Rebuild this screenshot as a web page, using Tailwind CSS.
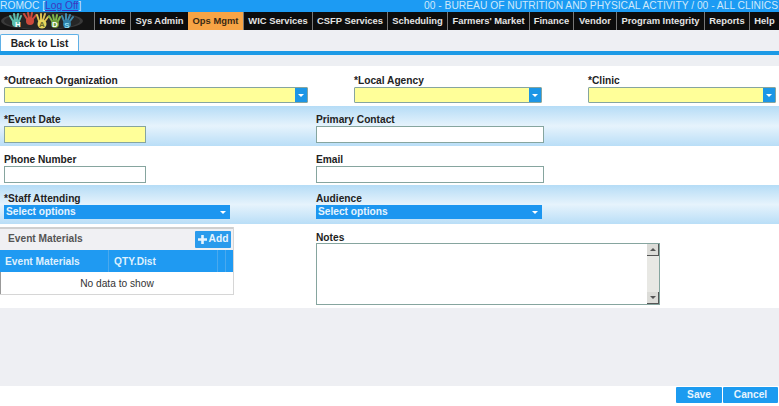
<!DOCTYPE html>
<html lang="en">
<head>
<meta charset="UTF-8">
<title>Outreach Event</title>
<script src="https://cdn.jsdelivr.net/npm/@tailwindcss/browser@4"></script>
</head>
<body class="bg-white font-['Liberation_Sans',Arial,sans-serif] text-[#222] overflow-hidden">
<div class="w-[779px] h-[406px] flex flex-col overflow-hidden">

  <!-- top bar -->
  <div class="h-[12px] bg-[#1c9bf3] flex justify-between items-center text-[10.25px] leading-[12px] text-[#cfe9fb]">
    <div class="whitespace-nowrap">ROMOC [<span class="text-[#3f37c0] underline">Log Off</span>]</div>
    <div class="whitespace-nowrap pr-[1px]">00 - BUREAU OF NUTRITION AND PHYSICAL ACTIVITY / 00 - ALL CLINICS</div>
  </div>

  <!-- nav -->
  <div class="h-[18px] bg-[#0c0c0c] flex text-[9.4px] font-bold text-[#e4e4e4] leading-[18px]">
    <div class="w-[94px] shrink-0 bg-[#141414] flex items-center">
      <svg width="84" height="18" viewBox="0 0 84 18" class="ml-[1px]">
        <ellipse cx="41" cy="9" rx="41" ry="9" fill="#3a3a3a"/>
        <ellipse cx="41" cy="9" rx="38" ry="8" fill="#262626"/>
        <g stroke-linecap="round" fill="none">
          <g stroke="#5cc0ae" stroke-width="2"><path d="M12 9L9 4M14 8l-1-6M16 8l1-6M18 9l2-5"/></g>
          <circle cx="15" cy="11" r="4" fill="#5cc0ae"/>
          <g stroke="#cf4a3c" stroke-width="2"><path d="M26 7l-3-5M28 6l-1-5M30 6l1-5M32 7l3-4"/></g>
          <circle cx="29" cy="9" r="4" fill="#cf4a3c"/>
          <g stroke="#dcc050" stroke-width="2"><path d="M38 9l-2-6M40 8l0-6M42 8l2-6M44 9l3-4"/></g>
          <circle cx="41" cy="12" r="4.5" fill="#e6d55c"/>
          <g stroke="#7fb84a" stroke-width="2"><path d="M51 9l-3-5M53 8l-1-5M55 8l1-5M57 9l2-4"/></g>
          <circle cx="54" cy="12" r="4" fill="#6f9f3e"/>
          <g stroke="#3f8db0" stroke-width="2"><path d="M63 9l-2-5M65 8l0-6M67 8l2-5M69 9l3-4"/></g>
          <circle cx="66" cy="12" r="4" fill="#2f7fa6"/>
        </g>
        <g font-family="Liberation Sans" font-weight="700" font-size="8" fill="#fff" text-anchor="middle">
          <text x="17" y="15">H</text>
          <text x="41" y="15" fill="#6a6a2a">A</text>
          <text x="54" y="15">D</text>
          <text x="66" y="16" fill="#8fe0f5">S</text>
        </g>
      </svg>
    </div>
    <div class="w-[36px] border-l border-[#777] text-center">Home</div>
    <div class="w-[58px] border-l border-[#777] text-center">Sys Admin</div>
    <div class="w-[55px] bg-[#f7a445] text-[#3a2a14] text-center">Ops Mgmt</div>
    <div class="w-[69px] border-l border-[#777] text-center">WIC Services</div>
    <div class="w-[75px] border-l border-[#777] text-center">CSFP Services</div>
    <div class="w-[60px] border-l border-[#777] text-center">Scheduling</div>
    <div class="w-[82px] border-l border-[#777] text-center">Farmers' Market</div>
    <div class="w-[44px] border-l border-[#777] text-center">Finance</div>
    <div class="w-[43px] border-l border-[#777] text-center">Vendor</div>
    <div class="w-[88px] border-l border-[#777] text-center">Program Integrity</div>
    <div class="w-[45px] border-l border-[#777] text-center">Reports</div>
    <div class="w-[30px] border-l border-[#777] text-center">Help</div>
  </div>

  <!-- sub bar with tab -->
  <div class="h-[21px] bg-[#eeeff3] flex items-end">
    <div class="w-[79px] h-[17px] bg-white border border-b-0 border-[#5fb0e6] rounded-t-[2px] text-center text-[10.2px] font-bold leading-[17px] text-[#222]">Back to List</div>
  </div>
  <div class="h-[4px] bg-[#1c9ae6]"></div>
  <div class="h-[11px] bg-[#edeff3]"></div>

  <!-- row 1 -->
  <div class="h-[40px] flex pl-[4px] pt-[9px]">
    <div class="w-[350px]">
      <div class="text-[10.2px] font-bold leading-[12px]">*Outreach Organization</div>
      <div class="w-[304px] h-[16px] flex bg-[#ffff99] border border-[#86a59f] rounded-[1px]">
        <div class="flex-1"></div>
        <div class="w-[12px] bg-[#1c96e6] flex items-center justify-center"><div class="border-x-[3px] border-x-transparent border-t-[3px] border-t-white"></div></div>
      </div>
    </div>
    <div class="w-[234px]">
      <div class="text-[10.2px] font-bold leading-[12px]">*Local Agency</div>
      <div class="w-[188px] h-[16px] flex bg-[#ffff99] border border-[#86a59f] rounded-[1px]">
        <div class="flex-1"></div>
        <div class="w-[12px] bg-[#1c96e6] flex items-center justify-center"><div class="border-x-[3px] border-x-transparent border-t-[3px] border-t-white"></div></div>
      </div>
    </div>
    <div class="w-[188px]">
      <div class="text-[10.2px] font-bold leading-[12px]">*Clinic</div>
      <div class="w-[188px] h-[16px] flex bg-[#ffff99] border border-[#86a59f] rounded-[1px]">
        <div class="flex-1"></div>
        <div class="w-[12px] bg-[#1c96e6] flex items-center justify-center"><div class="border-x-[3px] border-x-transparent border-t-[3px] border-t-white"></div></div>
      </div>
    </div>
  </div>

  <!-- row 2 -->
  <div class="h-[40px] flex pl-[4px] pt-[8px] bg-gradient-to-b from-[#b5dcf6] via-[#e6f3fc] to-[#b9def7]">
    <div class="w-[312px]">
      <div class="text-[10.2px] font-bold leading-[12px]">*Event Date</div>
      <div class="w-[142px] h-[17px] bg-[#ffff99] border border-[#86a59f]"></div>
    </div>
    <div>
      <div class="text-[10.2px] font-bold leading-[12px]">Primary Contact</div>
      <div class="w-[228px] h-[17px] bg-white border border-[#86a59f]"></div>
    </div>
  </div>

  <!-- row 3 -->
  <div class="h-[39px] flex pl-[4px] pt-[8px]">
    <div class="w-[312px]">
      <div class="text-[10.2px] font-bold leading-[12px]">Phone Number</div>
      <div class="w-[142px] h-[17px] bg-white border border-[#86a59f]"></div>
    </div>
    <div>
      <div class="text-[10.2px] font-bold leading-[12px]">Email</div>
      <div class="w-[228px] h-[17px] bg-white border border-[#86a59f]"></div>
    </div>
  </div>

  <!-- row 4 -->
  <div class="h-[39px] flex pl-[4px] pt-[8px] bg-gradient-to-b from-[#b5dcf6] via-[#e6f3fc] to-[#b9def7]">
    <div class="w-[312px]">
      <div class="text-[10.2px] font-bold leading-[12px]">*Staff Attending</div>
      <div class="w-[226px] h-[14px] flex items-center justify-between px-[2px] bg-[#1c96f0] text-[#e6f4fe] text-[10.2px] font-bold">
        <span>Select options</span>
        <div class="mr-[2px] border-x-[3px] border-x-transparent border-t-[3px] border-t-white"></div>
      </div>
    </div>
    <div>
      <div class="text-[10.2px] font-bold leading-[12px]">Audience</div>
      <div class="w-[226px] h-[14px] flex items-center justify-between px-[2px] bg-[#1c96f0] text-[#e6f4fe] text-[10.2px] font-bold">
        <span>Select options</span>
        <div class="mr-[2px] border-x-[3px] border-x-transparent border-t-[3px] border-t-white"></div>
      </div>
    </div>
  </div>

  <!-- row 5: materials grid and notes -->
  <div class="h-[84px] flex">
    <div class="w-[316px] pt-[3px]">
      <div class="w-[234px] h-[68px] border-b border-r border-[#d6d6d6]">
        <div class="h-[23px] pl-[8px] pr-[2px] pb-[1px] flex items-center justify-between bg-[#f0f0f3] border-t-2 border-[#cfcfcf]">
          <span class="text-[10.2px] font-bold text-[#555]">Event Materials</span>
          <div class="w-[36px] h-[17px] flex items-center justify-center gap-[2px] bg-[#2a9bec] text-[#e6f4fe] text-[10.2px] font-bold leading-none rounded-[1px]">
            <svg width="9" height="9" viewBox="0 0 9 9"><path d="M3.2 0h2.6v3.2H9v2.6H5.8V9H3.2V5.8H0V3.2h3.2z" fill="#e6f4fe"/></svg>Add
          </div>
        </div>
        <div class="h-[22px] flex bg-[#1f9af2] text-[#dff0fd] text-[10.2px] font-bold leading-[24px]">
          <div class="w-[109px] pl-[5px] border-r border-[#4aa9ee]">Event Materials</div>
          <div class="w-[109px] pl-[5px] border-r border-[#4aa9ee]">QTY.Dist</div>
          <div class="w-[8px] border-r border-[#4aa9ee]"></div>
        </div>
        <div class="h-[22px] text-center text-[10.2px] leading-[24px] text-[#333] border-l border-[#999]">No data to show</div>
      </div>
    </div>
    <div>
      <div class="text-[10.2px] font-bold leading-[12px] pt-[8px] h-[19px]">Notes</div>
      <div class="w-[344px] h-[62px] flex justify-end bg-white border border-[#86a59f]">
        <div class="w-[12px] flex flex-col justify-between bg-[#e8e8e4]">
          <div class="h-[12px] bg-[#dcdcd8] border-r border-b border-[#555] flex items-center justify-center"><div class="border-x-[3px] border-x-transparent border-b-[3px] border-b-[#555]"></div></div>
          <div class="h-[12px] bg-[#dcdcd8] border-r border-b border-[#555] flex items-center justify-center"><div class="border-x-[3px] border-x-transparent border-t-[3px] border-t-[#555]"></div></div>
        </div>
      </div>
    </div>
  </div>

  <div class="h-[78px] bg-[#eeeff3]"></div>

  <!-- footer -->
  <div class="flex-1 flex justify-end items-start pr-[1px] pt-[1px] gap-[1px]">
    <div class="w-[46px] h-[16px] bg-[#1c9bf0] text-[#e6f4fe] text-[10.2px] font-bold text-center leading-[16px] rounded-[1px]">Save</div>
    <div class="w-[55px] h-[16px] bg-[#1c9bf0] text-[#e6f4fe] text-[10.2px] font-bold text-center leading-[16px] rounded-[1px]">Cancel</div>
  </div>
</div>
</body>
</html>
